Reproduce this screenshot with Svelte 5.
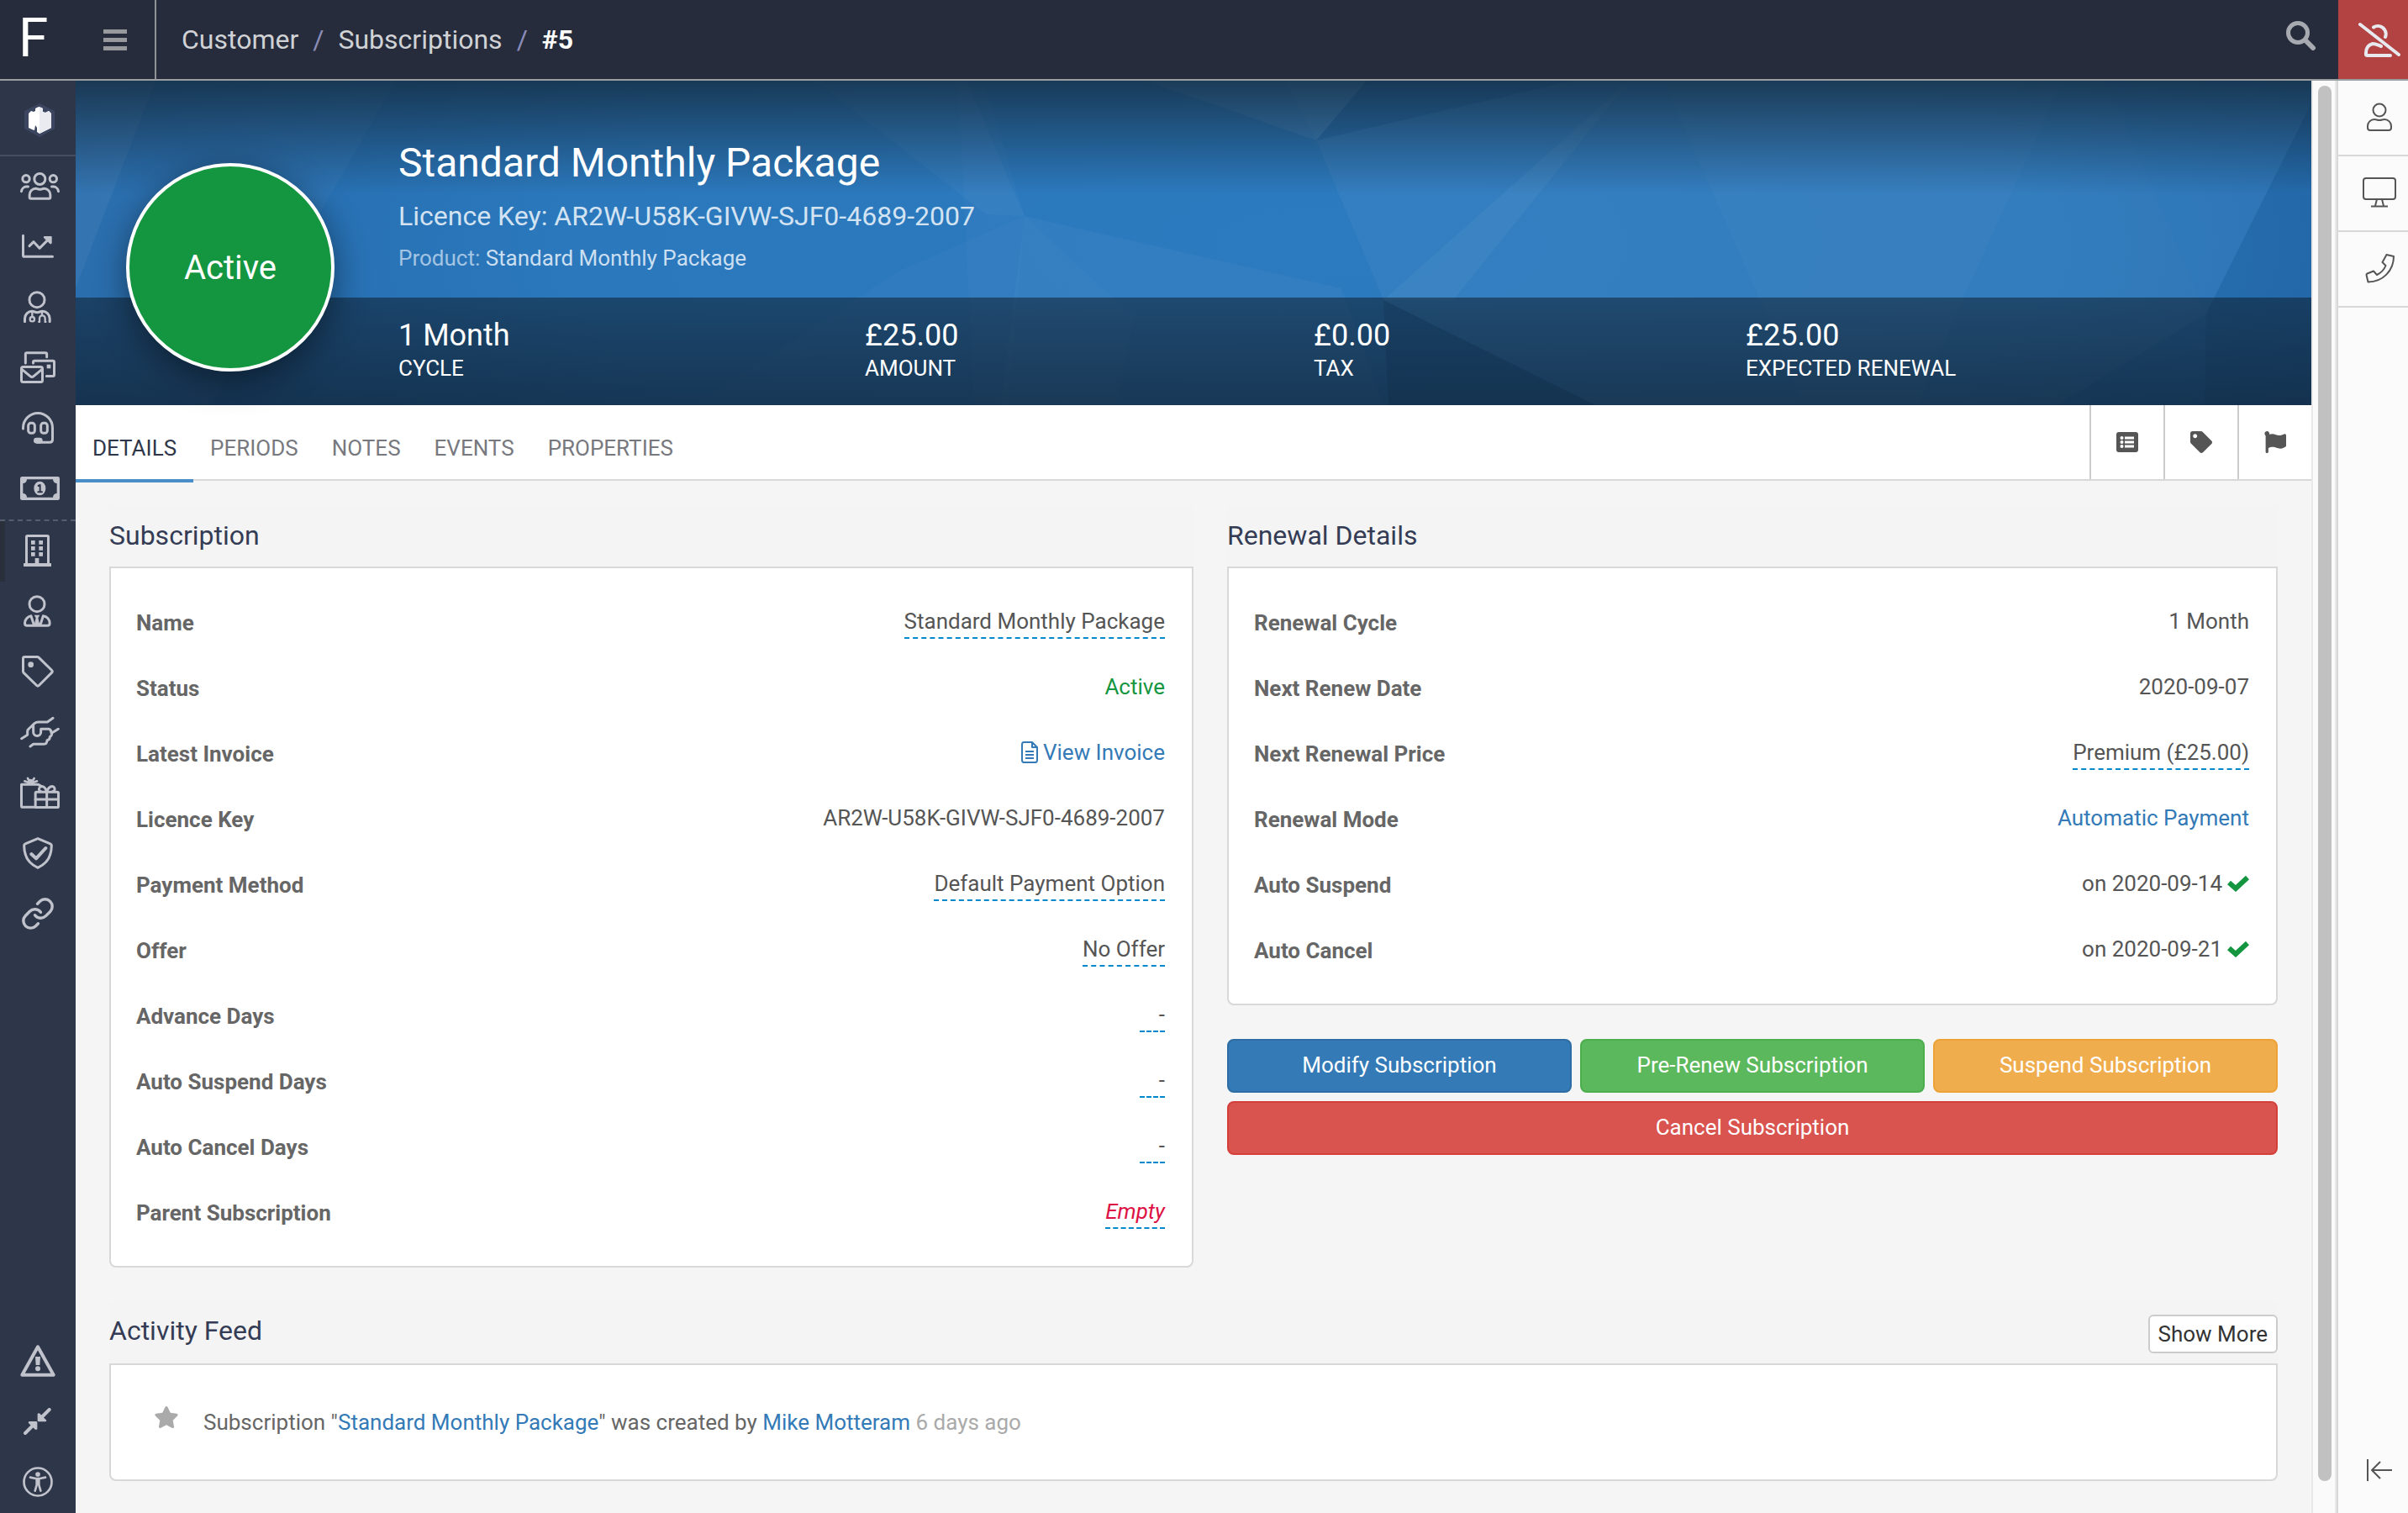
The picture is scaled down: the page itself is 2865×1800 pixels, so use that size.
<script>
    const mainNav = [
        {
            label: 'Customers', w: 141, h: 114,
            art: '<circle cx="70" cy="33" r="19.5"/><circle cx="21" cy="32" r="12.5"/><circle cx="118" cy="32" r="12.5"/><path d="M33.5 98V89a22 22 0 0 1 22-22c7 0 8 3 15 3s8-3 15-3a22 22 0 0 1 22 22v9q0 4.5-4.5 4.5H38q-4.5 0-4.5-4.5zM4.5 77a19 19 0 0 1 18-17h6M136.5 77a19 19 0 0 0-18-17h-6"/>'
        },
        {
            label: 'Reports', w: 114, h: 114,
            art: '<path d="M4.5 19v70q0 5 5 5h100M27 56l15-15 21 23 27-27"/><path class="solid" d="M80 21h24q3 0 3 3v22q-3 5-7 2L78 27q-2-5 2-6z"/>'
        },
        {
            label: 'Practitioners', w: 99, h: 114,
            art: '<circle cx="48" cy="32" r="27"/><path d="M4.5 110V99a26 26 0 0 1 26-26c8 0 10 4 18.5 4s10-4 18.5-4a26 26 0 0 1 26 26v11"/><g stroke-width="7"><path d="M31 75v16M66 75v11M55 111h2V98a10 10 0 0 1 20 0v13h2"/><circle cx="31" cy="101" r="8"/></g>'
        },
        {
            label: 'Mail', w: 126, h: 114,
            art: '<path d="M19 42V10q0-4.5 4.5-4.5h67q4.5 0 4.5 4.5v10M46.5 42v-4q0-4.5 4.5-4.5h66q4.5 0 4.5 4.5v46q0 4.5-4.5 4.5H94"/><rect class="solid" x="95" y="47" width="14" height="14"/><rect x="4.5" y="55.5" width="75" height="54" rx="6"/><path d="M6 64l30 25q6 5 12 0l30-25"/>'
        },
        {
            label: 'Support', w: 114, h: 114,
            art: '<path d="M4.5 60v-3a52 52 0 0 1 105 0v42q0 10-10 10H56"/><rect class="solid" x="42" y="92" width="32" height="21" rx="10"/><rect x="23" y="40" width="23" height="36" rx="9"/><rect x="68" y="40" width="23" height="36" rx="9"/>'
        },
        {
            label: 'Billing', w: 141, h: 84,
            art: '<path class="solid" fill-rule="evenodd" d="M7 0h127q7 0 7 7v70q0 7-7 7H7q-7 0-7-7V7q0-7 7-7zM24 10a14 14 0 0 1-14 14v36a14 14 0 0 1 14 14h93a14 14 0 0 1 14-14V24a14 14 0 0 1-14-14z"/><ellipse class="solid" cx="70" cy="42" rx="21" ry="25"/><path stroke="#2e364a" stroke-width="6" d="M65 33l6-3v25M64 55h14"/>'
        }
    ];

    const manageNav = [
        {
            label: 'Company', w: 99, h: 114, active: true,
            art: '<path d="M10.5 106V8q0-3.500 3.500-3.500h71q3.500 0 3.500 3.500v98"/><path class="solid" d="M2 102h95q2 0 2 2v8q0 2-2 2H2q-2 0-2-2v-8q0-2 2-2zM27 21h14v14H27zM55 21h14v14H55zM27 42h14v14H27zM55 42h14v14H55zM27 63h14v14H27zM55 63h14v14H55zM41 84h14v22H41z"/>'
        },
        {
            label: 'Staff', w: 99, h: 114,
            art: '<circle cx="48" cy="32" r="27"/><path d="M27 74A27 27 0 0 0 4.500 100q0 9 8 9h73q8 0 8-9A27 27 0 0 0 70 74M27 75l11 34M70 75l-11 34"/><path class="solid" d="M38 71h20l-6 11 7 28H37l7-28z"/>'
        },
        {
            label: 'Offers', w: 114, h: 114,
            art: '<path d="M4.500 10q0-5.500 5.500-5.500h45q3 0 5 2l47 46q4 4 0 8l-46 46q-4 4-8 0L6.500 61q-2-2-2-5z"/><circle class="solid" cx="32" cy="32" r="10"/>'
        },
        {
            label: 'Affiliates', w: 141, h: 114,
            art: '<path d="M5 80l21-13V55q0-6 5-10l20-19q6-5 14-5h32l20-14M47 30v27a13 13 0 0 0 27 0V46h28q9 2 9 13M136 46l-24 15c2 8-2 11-6 13 0 9-5 11-10 12 0 9-6 14-14 14H47l-11 8"/>'
        },
        {
            label: 'Gifts', w: 141, h: 114,
            art: '<path d="M54 109H9.500q-5 0-5-5V28h60l12 7"/><path stroke-width="8" d="M38 24L16 16M38 24L27 6M38 24V12M38 24L50 6M38 24l22-8"/><rect x="54.500" y="54.500" width="82" height="55" rx="4"/><path d="M95 54v55M54 81h82M94 53c-3-17-18-23-24-15s-2 13 4 15M96 53c3-17 19-23 25-15s1 13-5 15"/>'
        },
        {
            label: 'Security', w: 108, h: 114,
            art: '<path d="M54 5l43 18q6 2 6 8c0 36-18 64-49 78C23 95 5 67 5 31q0-6 6-8z"/><path stroke-width="12" d="M31 60l17 16 34-37"/>'
        },
        {
            label: 'Links', w: 114, h: 114,
            art: '<g transform="scale(5.18) translate(-1 -1)" stroke-width="2"><path d="M10 13a5 5 0 0 0 7.54.54l3-3a5 5 0 0 0-7.07-7.07l-1.720 1.710M14 11a5 5 0 0 0-7.540-.54l-3 3a5 5 0 0 0 7.070 7.070l1.710-1.710"/></g>'
        }
    ];

    const footNav = [
        {
            label: 'Warnings', w: 126, h: 114,
            art: '<path stroke-width="12" d="M63 7l56 100H7z"/><path class="solid" d="M54 42h18l-2 30H56z"/><circle class="solid" cx="63" cy="85" r="9"/>'
        },
        {
            label: 'Collapse menu', w: 99, h: 96,
            art: '<path stroke-width="12" d="M92 6L62 36M6 90l30-30"/><path class="solid" d="M50 21q4-5 9 0l23 23q0 5-4 5H54q-4 0-4-4zM49 75q-4 6-9 1L17 53q0-5 4-5h24q4 0 4 4z"/>'
        },
        {
            label: 'Accessibility', w: 108, h: 108,
            art: '<circle cx="54" cy="54" r="49.500" stroke-width="8"/><circle class="solid" cx="54" cy="27" r="8.500"/><path stroke-width="8" d="M27 38l20 4h14l20-4M50 43v22l-6 21M58 43v22l6 21M54 42v20"/>'
        }
    ];

    const railTools = [
        {
            label: 'Contact', w: 30, h: 34,
            art: '<circle cx="15" cy="9" r="7.500"/><path d="M1 30v-2a8 8 0 0 1 8-8c2.500 0 3 1 6 1s3.500-1 6-1a8 8 0 0 1 8 8v2q0 3-3 3H4q-3 0-3-3z"/>'
        },
        {
            label: 'Desktop', w: 40, h: 36,
            art: '<rect x="1" y="1" width="38" height="25" rx="3"/><path d="M17 26l-2 8M23 26l2 8M10 34.500h20"/>'
        },
        {
            label: 'Phone', w: 35, h: 35,
            art: '<path d="M25.500 1l8.500 2c0 17-13 30.500-30.500 30.500L1.500 25q0-1 1-1.500l7.500-3 4 4.500c5-2.500 8.500-6 10.500-11L20.500 10z"/>'
        }
    ];

    const stats = [
        { value: '1 Month', name: 'Cycle' },
        { value: '£25.00', name: 'Amount' },
        { value: '£0.00', name: 'Tax' },
        { value: '£25.00', name: 'Expected Renewal' }
    ];

    const tabs = ['Details', 'Periods', 'Notes', 'Events', 'Properties'];
    let activeTab = 'Details';

    const subscription = [
        { label: 'Name', value: 'Standard Monthly Package', kind: 'edit' },
        { label: 'Status', value: 'Active', kind: 'good' },
        { label: 'Latest Invoice', value: 'View Invoice', kind: 'invoice' },
        { label: 'Licence Key', value: 'AR2W-U58K-GIVW-SJF0-4689-2007' },
        { label: 'Payment Method', value: 'Default Payment Option', kind: 'edit' },
        { label: 'Offer', value: 'No Offer', kind: 'edit' },
        { label: 'Advance Days', value: '-', kind: 'edit' },
        { label: 'Auto Suspend Days', value: '-', kind: 'edit' },
        { label: 'Auto Cancel Days', value: '-', kind: 'edit' },
        { label: 'Parent Subscription', value: 'Empty', kind: 'empty' }
    ];

    const renewal = [
        { label: 'Renewal Cycle', value: '1 Month' },
        { label: 'Next Renew Date', value: '2020-09-07' },
        { label: 'Next Renewal Price', value: 'Premium (£25.00)', kind: 'edit' },
        { label: 'Renewal Mode', value: 'Automatic Payment', kind: 'link' },
        { label: 'Auto Suspend', value: 'on 2020-09-14', kind: 'check' },
        { label: 'Auto Cancel', value: 'on 2020-09-21', kind: 'check' }
    ];
</script>

{#snippet navItem(item)}
    <a href="#top" class="nav-item" class:active={item.active} aria-label={item.label}>
        <span class="nav-icon">
            <svg width={item.w / 3} height={item.h / 3} viewBox="0 0 {item.w} {item.h}">{@html item.art}</svg>
        </span>
    </a>
{/snippet}

{#snippet detailList(rows)}
    <dl class="card details">
        {#each rows as row}
            <div class="row">
                <dt>{row.label}</dt>
                <dd>
                    {#if row.kind === 'edit'}
                        <a href="#edit" class="editable">{row.value}</a>
                    {:else if row.kind === 'empty'}
                        <a href="#edit" class="editable empty">{row.value}</a>
                    {:else if row.kind === 'good'}
                        <span class="good">{row.value}</span>
                    {:else if row.kind === 'invoice'}
                        <a href="#invoice" class="with-icon">
                            <svg class="line-icon" width="20" height="26" viewBox="0 0 20 26"><path d="M3 1h10l6 6v15q0 3-2 3H3q-2 0-2-3V4q0-3 2-3zM13 1v6h6M5 12h10M5 16h10M5 20h10" /></svg>
                            {row.value}
                        </a>
                    {:else if row.kind === 'link'}
                        <a href="#mode">{row.value}</a>
                    {:else if row.kind === 'check'}
                        <span class="with-icon">
                            {row.value}
                            <svg class="tick" width="26" height="20" viewBox="0 0 26 20"><path d="M2 9l8 7L24 3" /></svg>
                        </span>
                    {:else}
                        {row.value}
                    {/if}
                </dd>
            </div>
        {/each}
    </dl>
{/snippet}

<div class="app" id="top">
    <header class="topbar">
        <a href="#top" class="brand">F</a>
        <button class="menu" aria-label="Toggle menu"><span></span><span></span><span></span></button>
        <nav class="crumbs">
            <a href="#customer">Customer</a>
            <i>/</i>
            <a href="#subscriptions">Subscriptions</a>
            <i>/</i>
            <b>#5</b>
        </nav>
        <button class="search" aria-label="Search">
            <svg width="36" height="36" viewBox="0 0 36 36"><circle cx="14" cy="14" r="11.500" stroke-width="5" /><path d="M23 23l9 9" stroke-width="6" /></svg>
        </button>
        <button class="logoff" aria-label="No caller">
            <svg width="50" height="42" viewBox="0 0 50 42"><path d="M2 3l46 36M18 6.500A9.500 9.500 0 0 1 32 18M27 29c-3-1-6-3-10-3q-8 2-8 11v2q0 1 2 1h27" /></svg>
        </button>
    </header>

    <div class="body">
        <nav class="sidebar">
            <a href="#top" class="org" aria-label="Organisation">
                <svg width="36" height="40" viewBox="0 0 36 40">
                    <path d="M18 0l18 9v21l-18 10L0 30V9z" fill="#3c4660" />
                    <path d="M5 12l3-3 3 1 2-1V6l4-2 5 2v4l3 1 4-2 3 3v17l-14 7-3-2v-5l-2-3-1 6-3-1-4-2z" fill="#fff" />
                    <path d="M18 4l4 2v4l3 1 4-2 3 3v17l-14 7z" fill="#e9ebf0" />
                </svg>
            </a>
            <div class="group">
                {#each mainNav as item}
                    {@render navItem(item)}
                {/each}
            </div>
            <div class="group dashed">
                {#each manageNav as item}
                    {@render navItem(item)}
                {/each}
            </div>
            <div class="group foot">
                {#each footNav as item}
                    {@render navItem(item)}
                {/each}
            </div>
        </nav>

        <main>
            <section class="banner">
                <svg class="facets" viewBox="0 0 2660 386" preserveAspectRatio="none">
                    <g fill="#fff">
                        <path opacity=".07" d="M0 0h95L0 247z" />
                        <path opacity=".03" d="M95 0h286L160 386H0V247z" />
                        <path opacity=".03" d="M880 0h180l69 161-46-2z" />
                        <path opacity=".02" d="M1050 0h30l49 161-20 225h-40z" />
                        <path opacity=".03" d="M1129 161l377 86 50 139H1100z" />
                        <path opacity=".02" d="M1129 161l130 120-20 105h-139z" />
                        <path opacity=".02" d="M978 227l151-66-29 225H737z" />
                        <path opacity=".07" d="M1273 0h167l36 71z" />
                        <path opacity=".09" d="M1440 0h96l-60 71z" />
                        <path opacity=".04" d="M1476 71L1780 0h69l-210 261h-83z" />
                        <path opacity=".04" d="M1849 0h568l118 277-178 109h-549l-252-125z" />
                        <path opacity=".02" d="M1889 0h475l-118 258-56 128h-135l-52-128z" />
                        <path opacity=".03" d="M2417 0h243v27l-125 250z" />
                    </g>
                    <g fill="#021c3a">
                        <path opacity=".14" d="M1556 261l252 125h-246z" />
                        <path opacity=".08" d="M2660 27v359h-127l2-109z" />
                        <path opacity=".05" d="M1536 0h244l-304 71z" />
                    </g>
                </svg>
                <div class="shade"></div>
                <div class="status">Active</div>
                <div class="heading">
                    <h1>Standard Monthly Package</h1>
                    <p class="licence">Licence Key: AR2W-U58K-GIVW-SJF0-4689-2007</p>
                    <p class="product">Product: <a href="#product">Standard Monthly Package</a></p>
                </div>
                <div class="stats">
                    {#each stats as stat}
                        <div>
                            <strong>{stat.value}</strong>
                            <span>{stat.name}</span>
                        </div>
                    {/each}
                </div>
            </section>

            <div class="tabbar">
                <div class="tabs">
                    {#each tabs as tab}
                        <button class="tab" class:current={tab === activeTab} on:click={() => (activeTab = tab)}>{tab}</button>
                    {/each}
                </div>
                <button class="tool" aria-label="List">
                    <svg width="26" height="24" viewBox="0 0 26 24"><rect width="26" height="24" rx="3" fill="#555" /><g fill="#fff"><circle cx="6.500" cy="7" r="2" /><circle cx="6.500" cy="12" r="2" /><circle cx="6.500" cy="17" r="2" /><path d="M10 5.500h11v3H10zM10 10.500h11v3H10zM10 15.500h11v3H10z" /></g></svg>
                </button>
                <button class="tool" aria-label="Tag">
                    <svg width="26" height="26" viewBox="0 0 512 512"><path fill="#555" d="M0 252.118V48C0 21.490 21.490 0 48 0h204.118a48 48 0 0 1 33.941 14.059l211.882 211.882c18.745 18.745 18.745 49.137 0 67.882L293.823 497.941c-18.745 18.745-49.137 18.745-67.882 0L14.059 286.059A48 48 0 0 1 0 252.118zM112 64c-26.510 0-48 21.490-48 48s21.490 48 48 48 48-21.490 48-48-21.490-48-48-48z" /></svg>
                </button>
                <button class="tool" aria-label="Flag">
                    <svg width="26" height="26" viewBox="0 0 512 512"><path fill="#555" d="M349.565 98.783C295.978 98.783 251.721 64 184.348 64c-24.955 0-47.309 4.384-68.045 12.013a55.947 55.947 0 0 0 3.586-23.562C118.117 24.015 94.806 1.206 66.338.048 34.345-1.254 8 24.296 8 56c0 19.026 9.497 35.825 24 45.945V488c0 13.255 10.745 24 24 24h16c13.255 0 24-10.745 24-24v-94.400c28.311-12.064 63.582-22.122 114.435-22.122 53.588 0 97.844 34.783 165.217 34.783 48.169 0 86.667-16.294 122.505-40.858C506.840 359.452 512 349.571 512 339.045v-243.100c0-23.393-24.269-38.870-45.485-29.016-34.338 15.948-76.454 31.854-116.950 31.854z" /></svg>
                </button>
            </div>

            <div class="content">
                <div class="columns">
                    <section>
                        <div class="section-title"><h2>Subscription</h2></div>
                        {@render detailList(subscription)}
                    </section>
                    <section>
                        <div class="section-title"><h2>Renewal Details</h2></div>
                        {@render detailList(renewal)}
                        <div class="actions">
                            <button class="btn primary">Modify Subscription</button>
                            <button class="btn success">Pre-Renew Subscription</button>
                            <button class="btn warning">Suspend Subscription</button>
                            <button class="btn danger">Cancel Subscription</button>
                        </div>
                    </section>
                </div>

                <section>
                    <div class="section-title with-action">
                        <h2>Activity Feed</h2>
                        <button class="more">Show More</button>
                    </div>
                    <div class="card feed">
                        <svg width="28" height="26" viewBox="20 0 536 512"><path fill="#aaa" d="M259.300 17.800L194 150.200 47.900 171.500c-26.200 3.800-36.700 36.100-17.700 54.600l105.700 103-25 145.500c-4.500 26.300 23.200 46 46.400 33.700L288 439.600l130.700 68.700c23.200 12.200 50.900-7.400 46.400-33.700l-25-145.500 105.700-103c19-18.500 8.500-50.800-17.700-54.600L382 150.200 316.700 17.800c-11.700-23.600-45.600-23.900-57.400 0z" /></svg>
                        <p>Subscription "<a href="#package">Standard Monthly Package</a>" was created by <a href="#mike">Mike Motteram</a> <time>6 days ago</time></p>
                    </div>
                </section>
            </div>
        </main>

        <div class="scroll"><div class="thumb"></div></div>

        <aside class="rail">
            {#each railTools as tool}
                <button class="rail-tool" aria-label={tool.label}>
                    <svg class="line-icon" width={tool.w} height={tool.h} viewBox="0 0 {tool.w} {tool.h}">{@html tool.art}</svg>
                </button>
            {/each}
            <button class="rail-tool expand" aria-label="Expand">
                <svg class="line-icon" width="30" height="26" viewBox="0 0 30 26"><path d="M1 0v26M30 13H6M16 3L6 13l10 10" /></svg>
            </button>
        </aside>
    </div>
</div>

<style>
    :global(body) {
        background: #f5f5f5;
        font-family: Roboto, "Liberation Sans", sans-serif;
        font-size: 26px;
        color: #555;
    }
    a {
        color: #337ab7;
        text-decoration: none;
    }
    button {
        font: inherit;
        border: 0;
        padding: 0;
        background: none;
        cursor: pointer;
    }
    h1, h2, p, dl, dd {
        margin: 0;
        font-weight: 400;
    }
    svg {
        display: block;
        flex: none;
    }
    .app {
        display: flex;
        flex-direction: column;
        min-height: 100vh;
        overflow: hidden;
    }

    /* top bar */
    .topbar {
        display: flex;
        align-items: stretch;
        height: 94px;
        background: #262c3b;
        border-bottom: 2px solid #9a9da2;
    }
    .brand {
        width: 90px;
        padding-left: 22px;
        box-sizing: border-box;
        font-size: 64px;
        line-height: 92px;
        color: #fff;
    }
    .menu {
        display: flex;
        flex-direction: column;
        justify-content: center;
        align-items: center;
        gap: 5px;
        width: 96px;
        border-right: 2px solid #8f9296;
    }
    .menu span {
        width: 28px;
        height: 5px;
        background: #97999c;
    }
    .crumbs {
        display: flex;
        align-items: center;
        gap: 17px;
        flex: 1;
        padding-left: 30px;
        font-size: 32px;
    }
    .crumbs a {
        color: #d0d2d5;
    }
    .crumbs i {
        font-style: normal;
        color: #8b8cb8;
    }
    .crumbs b {
        color: #fff;
    }
    .search {
        padding: 0 26px 8px 0;
    }
    .search svg, .logoff svg {
        fill: none;
        stroke: #a8aab1;
        stroke-linecap: round;
    }
    .logoff {
        width: 83px;
        padding-left: 24px;
        background: #b34342;
    }
    .logoff svg {
        stroke: #e8e9ef;
        stroke-width: 4px;
    }

    .body {
        display: flex;
        flex: 1;
    }

    /* sidebar */
    .sidebar {
        display: flex;
        flex-direction: column;
        width: 90px;
        flex: none;
        background: #2e364a;
        color: #c0c3cb;
    }
    .org {
        display: flex;
        align-items: center;
        height: 90px;
        padding: 6px 0 0 29px;
        box-sizing: border-box;
        border-bottom: 2px solid #464d5f;
    }
    .nav-item {
        display: flex;
        align-items: center;
        height: 72px;
        padding: 0 0 3px 24px;
        box-sizing: border-box;
        color: inherit;
    }
    .nav-item.active {
        border-left: 6px solid #2a2f3c;
        padding-left: 18px;
    }
    .nav-icon {
        display: flex;
        justify-content: center;
        min-width: 41px;
    }
    .nav-icon svg {
        fill: none;
        stroke: currentColor;
        stroke-width: 9px;
        stroke-linecap: round;
        stroke-linejoin: round;
    }
    .nav-icon :global(.solid) {
        fill: currentColor;
        stroke: none;
    }
    .dashed {
        border-top: 2px dashed #565d6c;
    }
    .foot {
        margin-top: auto;
    }

    main {
        flex: 1;
        min-width: 0;
    }

    /* banner */
    .banner {
        position: relative;
        display: flex;
        flex-direction: column;
        height: 386px;
        color: #fff;
        background: radial-gradient(ellipse 60% 160% at 55% 50%, #2c7abf 0%, #2b78bc 55%, #2367a8 100%);
    }
    .facets, .shade {
        position: absolute;
        inset: 0;
        width: 100%;
        height: 100%;
    }
    .shade {
        background: linear-gradient(rgba(17, 36, 52, .74), rgba(17, 36, 52, 0) 35%, rgba(17, 36, 52, 0) 67%, rgba(17, 36, 60, .38));
    }
    .status {
        position: absolute;
        left: 60px;
        top: 98px;
        z-index: 1;
        width: 240px;
        height: 240px;
        border: 4px solid #fff;
        border-radius: 50%;
        background: #149641;
        box-shadow: 0 10px 40px rgba(0, 0, 0, .45);
        font-size: 40px;
        line-height: 242px;
        text-align: center;
    }
    .heading {
        position: relative;
        flex: 1;
        padding: 68px 0 0 384px;
    }
    h1 {
        font-size: 48px;
        line-height: 60px;
    }
    .licence {
        font-size: 32px;
        line-height: 38px;
        margin-top: 14px;
        color: #d3e3f2;
    }
    .product {
        line-height: 34px;
        margin-top: 14px;
        color: #a3c4e3;
    }
    .product a {
        color: #cbdff1;
    }
    .stats {
        position: relative;
        display: grid;
        grid-template-columns: 555fr 534fr 514fr 673fr;
        height: 128px;
        padding: 24px 0 0 384px;
        box-sizing: border-box;
        background: rgba(12, 22, 32, .5);
    }
    .stats strong, .stats span {
        display: block;
    }
    .stats strong {
        font-weight: 400;
        font-size: 36px;
        line-height: 42px;
    }
    .stats span {
        line-height: 36px;
        text-transform: uppercase;
    }

    /* tabs */
    .tabbar {
        display: flex;
        height: 88px;
        background: #fff;
        border-bottom: 2px solid #d8d8d8;
    }
    .tabs {
        display: flex;
        flex: 1;
    }
    .tab {
        height: 92px;
        padding: 14px 20px 0;
        box-sizing: border-box;
        border-bottom: 4px solid transparent;
        text-transform: uppercase;
        color: #77797e;
    }
    .tab.current {
        color: #2e364a;
        border-color: #4a8ec9;
    }
    .tool {
        display: flex;
        align-items: center;
        justify-content: center;
        width: 88px;
        border-left: 2px solid #ccc;
    }

    /* content */
    .content {
        padding: 30px 40px 36px;
    }
    .columns {
        display: grid;
        grid-template-columns: 129fr 125fr;
        gap: 40px;
        margin-bottom: 40px;
    }
    .section-title {
        display: flex;
        align-items: center;
        justify-content: space-between;
        height: 72px;
        padding-bottom: 2px;
        box-sizing: border-box;
        background: #f4f4f4;
    }
    .with-action {
        height: 74px;
        padding-bottom: 4px;
    }
    h2 {
        font-size: 32px;
        color: #343c55;
    }
    .card {
        background: #fff;
        border: 2px solid #d8d8d8;
        border-radius: 0 0 8px 8px;
    }
    .details {
        padding: 24px 32px 26px 30px;
    }
    .row {
        display: flex;
        justify-content: space-between;
        align-items: flex-start;
        height: 78px;
        padding-top: 20px;
        box-sizing: border-box;
    }
    dt {
        font-weight: 700;
        line-height: 42px;
        color: #666;
    }
    dd {
        line-height: 38px;
    }
    .editable {
        display: block;
        min-width: 30px;
        color: #555;
        text-align: right;
        border-bottom: 2px dashed #08c;
    }
    .editable.empty {
        color: #d14;
        font-style: italic;
    }
    .good {
        color: #149641;
    }
    .with-icon {
        display: flex;
        align-items: center;
        gap: 6px;
    }
    .line-icon {
        fill: none;
        stroke: currentColor;
        stroke-width: 2px;
        stroke-linejoin: round;
    }
    .tick {
        fill: none;
        stroke: #149641;
        stroke-width: 6px;
    }
    .actions {
        display: grid;
        grid-template-columns: repeat(3, 1fr);
        gap: 10px;
        margin-top: 40px;
    }
    .btn {
        height: 64px;
        padding-bottom: 2px;
        border: 2px solid;
        border-radius: 8px;
        color: #fff;
    }
    .primary {
        background: #337ab7;
        border-color: #2e6da4;
    }
    .success {
        background: #5cb85c;
        border-color: #4cae4c;
    }
    .warning {
        background: #f0ad4e;
        border-color: #eea236;
    }
    .danger {
        grid-column: 1 / -1;
        background: #d9534f;
        border-color: #d43f3a;
    }
    .more {
        align-self: flex-end;
        height: 46px;
        margin-bottom: 8px;
        padding: 0 10px;
        border: 2px solid #ccc;
        border-radius: 6px;
        background: #fff;
        color: #333;
    }
    .feed {
        display: flex;
        align-items: center;
        gap: 30px;
        height: 140px;
        padding-left: 52px;
        box-sizing: border-box;
        color: #666;
    }
    .feed svg {
        margin-bottom: 12px;
    }
    time {
        color: #aaa;
    }

    /* scrollbar and right rail */
    .scroll {
        display: flex;
        width: 16px;
        padding: 6px 4px 38px 6px;
        background: #fafafa;
        border-left: 2px solid #e8e8e8;
        border-right: 2px solid #e8e8e8;
    }
    .thumb {
        width: 16px;
        border-radius: 8px;
        background: #c1c1c1;
    }
    .rail {
        display: flex;
        flex-direction: column;
        width: 83px;
        background: #fbfbfb;
        border-left: 2px solid #d8d8d8;
    }
    .rail-tool {
        display: flex;
        align-items: center;
        justify-content: center;
        height: 90px;
        padding: 0 0 2px 15px;
        border-bottom: 2px solid #d8d8d8;
        color: #555;
    }
    .rail-tool.expand {
        margin-top: auto;
        border: 0;
        padding-bottom: 12px;
    }
</style>
